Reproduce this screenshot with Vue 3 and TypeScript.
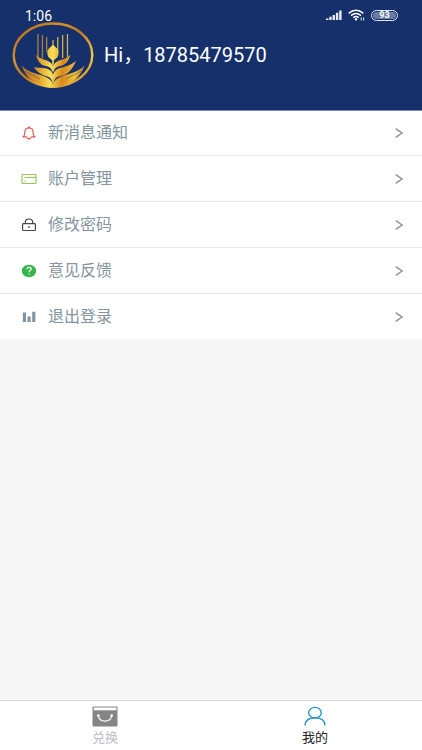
<script setup lang="ts">
import { ref } from 'vue'

interface MenuItem {
  id: 'bell' | 'card' | 'lock' | 'help' | 'bars'
  label: string
}

const items: MenuItem[] = [
  { id: 'bell', label: '新消息通知' },
  { id: 'card', label: '账户管理' },
  { id: 'lock', label: '修改密码' },
  { id: 'help', label: '意见反馈' },
  { id: 'bars', label: '退出登录' },
]

const phone = ref('18785479570')
const rays = [
  { x: 25.3, y: 12, h: 23 },
  { x: 29.8, y: 13, h: 23 },
  { x: 34, y: 15, h: 15 },
  { x: 45.1, y: 15, h: 15 },
  { x: 50, y: 13, h: 23 },
  { x: 54.8, y: 12, h: 23 },
]
</script>

<template>
  <div class="page">
    <header class="header">
      <div class="status">
        <time class="clock">1:06</time>
        <div class="indicators">
          <svg class="signal" viewBox="0 0 16 10" aria-hidden="true">
            <path d="M0 10V8.500h2.400V10zM3.300 10V6.800h2.400V10zM6.600 10V5H9v5zM9.900 10V2.800h2.400V10zM13.200 10V.5h2.400V10z" fill="#e8ecf7" />
          </svg>
          <svg class="wifi" viewBox="0 0 17 12" fill="none" stroke="#fff" stroke-width="1.5" aria-hidden="true">
            <path d="M.6 4.300Q8 -1.800 15.4 4.300M3 6.600Q8 2.600 13 6.600M5.300 8.700Q8 6.500 10.700 8.700" />
            <circle cx="8" cy="10.300" r="1.200" fill="#fff" stroke="none" />
            <path d="M13.200 8.500v3M15.600 8.500v3" stroke-width=".9" />
          </svg>
          <span class="battery"><span class="level">93</span></span>
        </div>
      </div>
      <div class="profile">
        <svg class="avatar" viewBox="0 0 82 66" role="img" aria-label="头像">
          <defs>
            <linearGradient id="gold" gradientUnits="userSpaceOnUse" x1="9" x2="73" y1="40" y2="46">
              <stop offset="0" stop-color="#b96a19" />
              <stop offset=".28" stop-color="#dd9a28" />
              <stop offset=".48" stop-color="#fadf55" />
              <stop offset=".66" stop-color="#d8871e" />
              <stop offset=".85" stop-color="#f0c33c" />
              <stop offset="1" stop-color="#c98222" />
            </linearGradient>
            <linearGradient id="rim" x1="0" x2="1" y1="0" y2="1">
              <stop offset="0" stop-color="#a9621d" />
              <stop offset=".3" stop-color="#d99129" />
              <stop offset=".5" stop-color="#c37b24" />
              <stop offset=".75" stop-color="#f2c944" />
              <stop offset="1" stop-color="#b76c1e" />
            </linearGradient>
          </defs>
          <ellipse cx="41" cy="33" rx="39.300" ry="31.500" fill="none" stroke="url(#rim)" stroke-width="2.400" />
          <rect v-for="ray in rays" :key="ray.x" :x="ray.x" :y="ray.y" width="1.300" :height="ray.h" :fill="ray.x < 40 ? '#a9803f' : '#cfae49'" />
          <g fill="url(#gold)">
            <path d="M40.500 18h1v5c1.500 2 3 2.500 4 4 1.800 2.500 1.300 6.500-.3 8.500-1.100 1.300-2.700 1.800-3.400 3.200v4h-1.600v-4c-.7-1.400-2.300-1.900-3.400-3.200-1.600-2-2.100-6-.3-8.500 1-1.500 2.500-2 4-4z" />
            <path d="M24 33c4 3.500 7.500 4.300 10.800 5.500 3 1.100 5.200 3 6.200 5.500 1-2.500 3.200-4.400 6.200-5.500C50.500 37.300 54.500 37 58.500 32.500c-1.500 6-5 10.500-10 11.500-4 .8-6 2-6.600 5.500h-1.800c-.6-3.500-2.600-4.700-6.600-5.500-5-1-8-5.500-9.500-11z" />
            <path d="M22 45c4.500 1.300 8.500.5 12.500 1.500 3.500.9 5.700 3 6.500 6 1-3 3.300-5.500 7-6.500 5-1.400 10.500-2.500 16-7-3.500 7.500-7.500 14-15.500 15-4 .5-6.300 3-7 7h-1c-.7-4-2.500-6-6.500-7-5-1.200-9.500-4.500-12-9z" />
            <path d="M9.500 43.500C15 49 20 50.500 27 52.500c7 2 12 4.500 14 9.500 2-5 7-7.500 14-9.500 7-2 12-3.500 17.500-9C68 57 54 65.800 41 65.800S14 57 9.500 43.500z" />
          </g>
          <path d="M13 49c5.500 4 10 4.500 15 8M69 49c-5.500 4-10 4.500-15 8" fill="none" stroke="#15306b" stroke-width=".7" opacity=".6" />
        </svg>
        <h1 class="greeting">Hi，{{ phone }}</h1>
      </div>
    </header>

    <main class="content">
      <ul class="menu">
        <li v-for="item in items" :key="item.id" class="menu-item">
          <a href="#" class="row">
            <svg class="row-icon" viewBox="0 0 16 14" fill="none" aria-hidden="true">
              <g v-if="item.id === 'bell'" stroke="#df554d" stroke-width="1.200" stroke-linejoin="round" stroke-linecap="round">
                <path d="M2 10.900c1.500-1 2-2.300 2-5.100C4 3.300 5.500 2 8 2s4 1.300 4 3.800c0 2.800.5 4.100 2 5.100H10.500M2 10.900h3.500M7.500 1.900V1h1v.9" />
                <path d="M6.200 12q1.800 1.600 3.600 0" />
              </g>
              <g v-else-if="item.id === 'card'" stroke="#94c954" stroke-width="1.200">
                <rect x="1" y="2.500" width="14" height="9" rx="1" />
                <path d="M3.500 5.500H15M3.500 9h1.500" />
              </g>
              <g v-else-if="item.id === 'lock'" stroke="#484848" stroke-width="1.200">
                <rect x="1.600" y="5.600" width="12.800" height="6.900" rx=".8" />
                <path d="M4.300 5.600V4.300C4.300 2.100 5.700 1 8 1s3.700 1.100 3.700 3.300v1.300M8 8v2" />
              </g>
              <g v-else-if="item.id === 'help'">
                <ellipse cx="8" cy="7" rx="7.200" ry="6.200" fill="#35b64b" />
                <path d="M5.900 5.300C6 3.900 6.800 3.400 8 3.400c1.300 0 2.200.7 2.200 1.800C10.200 6.700 8 6.500 8 8.300M8 9.500v1.100" stroke="#fff" stroke-width="1.200" />
              </g>
              <path v-else d="M1.800 2.500h3.200v9.500H1.800zM6.500 6.500h3.200V12H6.500zM11.200 1.800h3.200V12h-3.200z" fill="#8495a5" />
            </svg>
            <span class="row-label">{{ item.label }}</span>
            <svg class="chevron" viewBox="0 0 8 10" fill="none" stroke="#8b9499" stroke-width="1.400" aria-hidden="true">
              <path d="M.7.700 7 5 .7 9.300" />
            </svg>
          </a>
        </li>
      </ul>
    </main>

    <nav class="tabs">
      <a href="#" class="tab">
        <svg class="tab-icon" viewBox="0 0 26 21" aria-hidden="true">
          <rect x=".5" y=".5" width="25" height="20" rx="1" fill="#858585" />
          <rect x="1.800" y="1.500" width="22.600" height="2.800" fill="#fff" />
          <path d="M6.300 9.500c1 7.500 12.400 7.500 13.400 0" fill="none" stroke="#fff" stroke-width="1.300" />
          <circle cx="6.300" cy="9.600" r="1.300" fill="#fff" />
          <circle cx="19.700" cy="9.600" r="1.300" fill="#fff" />
        </svg>
        <span>兑换</span>
      </a>
      <a href="#" class="tab active" aria-current="page">
        <svg class="tab-icon" viewBox="0 0 26 21" fill="none" stroke="#2d91c9" stroke-width="1.400" aria-hidden="true">
          <ellipse cx="13" cy="6.700" rx="6.300" ry="5.300" />
          <path d="M3 19.500C3 14.500 7 11.900 13 11.900S23 14.500 23 19.500" />
        </svg>
        <span>我的</span>
      </a>
    </nav>
  </div>
</template>

<style>
body {
  margin: 0;
  background: #f7f7f7;
}
</style>

<style scoped>
.page {
  display: flex;
  flex-direction: column;
  min-height: 100vh;
  background: #f7f7f7;
  font-family: Roboto, "Noto Sans CJK SC", sans-serif;
}

.header {
  padding-bottom: 22px;
  background: #15306b;
  color: #fff;
}

.status {
  display: flex;
  align-items: flex-end;
  justify-content: space-between;
  height: 22px;
  padding: 0 24px 0 25px;
}

.clock {
  font-size: 14px;
  line-height: 12px;
}

.indicators {
  display: flex;
  align-items: center;
  gap: 6px;
  height: 14px;
}

.signal {
  width: 16px;
  height: 10px;
}

.wifi {
  width: 17px;
  height: 12px;
}

.battery {
  box-sizing: border-box;
  display: flex;
  width: 27px;
  height: 11px;
  padding: 1px;
  border: 1px solid #e5e9f5;
  border-radius: 6px;
}

.level {
  flex: 1;
  border-radius: 4px;
  background: #6c7ba5;
  font-size: 9px;
  font-weight: 700;
  line-height: 7px;
  text-align: center;
}

.profile {
  display: flex;
  align-items: center;
  gap: 10px;
  padding-left: 12px;
}

.avatar {
  width: 82px;
  height: 66px;
}

.greeting {
  margin: 0;
  font-size: 20px;
  font-weight: 400;
  line-height: 24px;
}

.content {
  flex: 1;
}

.menu {
  margin: 0;
  padding: 0;
  list-style: none;
  background: #fff;
}

.menu-item {
  box-sizing: border-box;
  height: 46px;
  border-top: 1px solid #e7e7e7;
}

.menu-item:first-child {
  height: 45px;
  border-top-color: #7f89b4;
}

.row {
  display: flex;
  align-items: center;
  height: 100%;
  padding: 0 19px 0 21px;
  color: #8494a0;
  text-decoration: none;
}

.row-icon {
  width: 16px;
  height: 14px;
  margin-right: 11px;
}

.row-label {
  flex: 1;
  font-size: 16px;
  line-height: 24px;
}

.chevron {
  width: 8px;
  height: 10px;
}

.tabs {
  display: flex;
  padding-right: 2px;
  border-top: 1px solid #d8d8d8;
  background: #fff;
}

.tab {
  display: flex;
  flex: 1;
  flex-direction: column;
  align-items: center;
  height: 49px;
  padding-top: 5px;
  box-sizing: border-box;
  color: #bcbec6;
  font-size: 13px;
  line-height: 22px;
  text-decoration: none;
}

.tab-icon {
  width: 26px;
  height: 21px;
}

.active {
  color: #222;
}
</style>
